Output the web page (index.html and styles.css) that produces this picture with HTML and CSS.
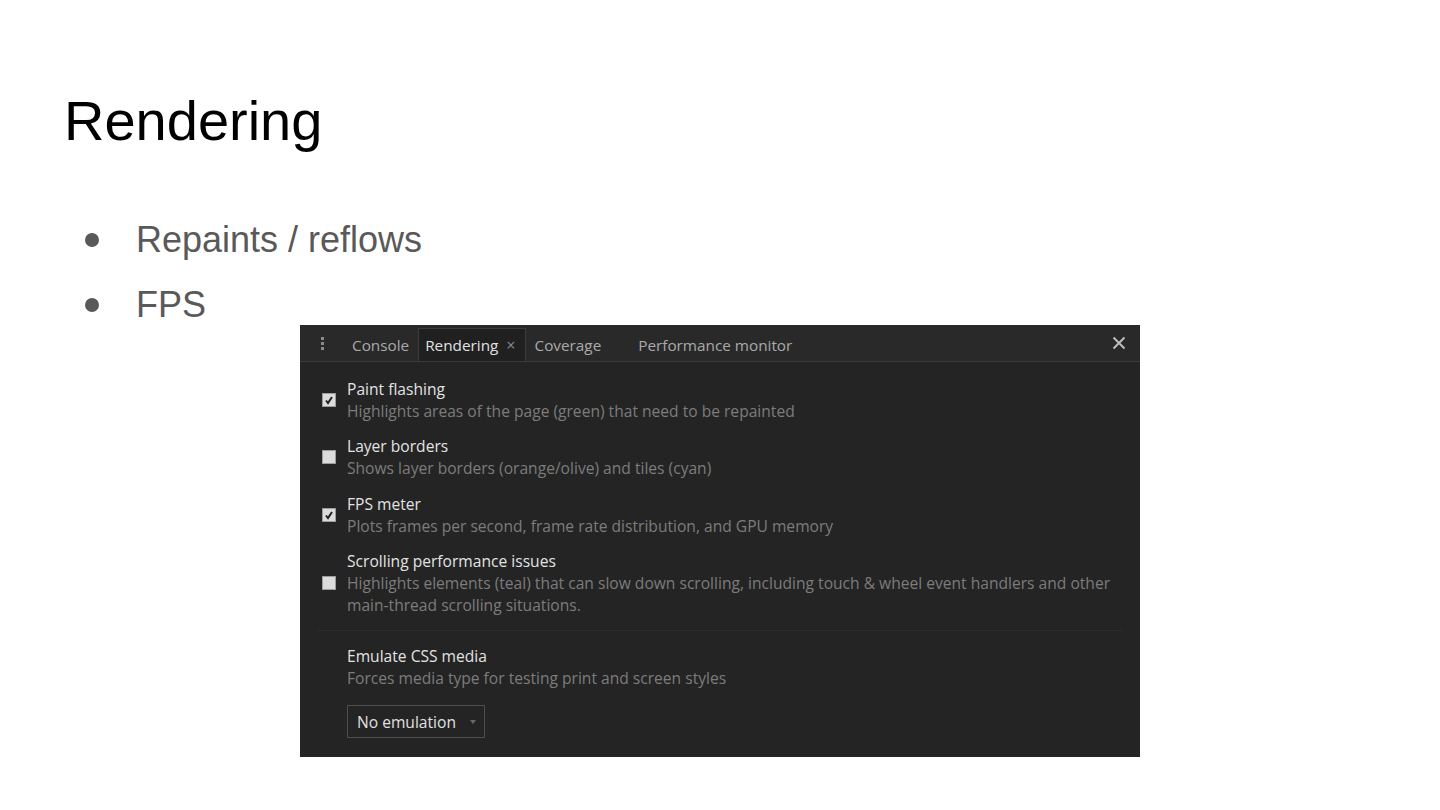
FILE: index.html
```html
<!DOCTYPE html>
<html>
<head>
<meta charset="utf-8">
<link rel="stylesheet" href="styles.css">
</head>
<body>
<div class="slide">
  <h1 class="title">Rendering</h1>
  <ul class="bullets">
    <li>Repaints / reflows</li>
    <li>FPS</li>
  </ul>
  <div class="panel">
    <div class="tabbar">
      <div class="dots"><span></span><span></span><span></span></div>
      <div class="tab">Console</div>
      <div class="tab active">Rendering <span class="tabx">×</span></div>
      <div class="tab">Coverage</div>
      <div class="tab perf">Performance monitor</div>
      <div class="spacer"></div>
      <svg class="close" width="14" height="14" viewBox="0 0 14 14"><path d="M1.5 1.5L12.5 12.5M12.5 1.5L1.5 12.5" stroke="#bdbdbd" stroke-width="2"/></svg>
    </div>
    <div class="content">
      <div class="opt">
        <div class="cb checked"><svg width="10" height="10" viewBox="0 0 10 10"><path d="M2 5.5L4 8L8 2" stroke="#222" stroke-width="2" fill="none"/></svg></div>
        <div class="txt">
          <div class="otitle">Paint flashing</div>
          <div class="odesc">Highlights areas of the page (green) that need to be repainted</div>
        </div>
      </div>
      <div class="opt">
        <div class="cb"></div>
        <div class="txt">
          <div class="otitle">Layer borders</div>
          <div class="odesc">Shows layer borders (orange/olive) and tiles (cyan)</div>
        </div>
      </div>
      <div class="opt">
        <div class="cb checked"><svg width="10" height="10" viewBox="0 0 10 10"><path d="M2 5.5L4 8L8 2" stroke="#222" stroke-width="2" fill="none"/></svg></div>
        <div class="txt">
          <div class="otitle">FPS meter</div>
          <div class="odesc">Plots frames per second, frame rate distribution, and GPU memory</div>
        </div>
      </div>
      <div class="opt">
        <div class="cb"></div>
        <div class="txt">
          <div class="otitle">Scrolling performance issues</div>
          <div class="odesc">Highlights elements (teal) that can slow down scrolling, including touch &amp; wheel event handlers and other main-thread scrolling situations.</div>
        </div>
      </div>
      <div class="divider"></div>
      <div class="media">
        <div class="otitle">Emulate CSS media</div>
        <div class="odesc">Forces media type for testing print and screen styles</div>
        <div class="select">No emulation <span class="caret"></span></div>
      </div>
    </div>
  </div>
</div>
</body>
</html>
```
FILE: styles.css
```css
* { box-sizing: border-box; }
html, body { margin: 0; padding: 0; background: #fff; }
.slide {
  width: 1440px;
  height: 810px;
  position: relative;
  overflow: hidden;
  font-family: "Liberation Sans", Arial, sans-serif;
}
.title {
  margin: 0;
  padding: 87px 0 0 64px;
  font-weight: normal;
  font-size: 56px;
  line-height: 68px;
  color: #000;
}
.bullets {
  list-style: none;
  margin: 0;
  padding: 52px 0 0 0;
}
.bullets li {
  position: relative;
  padding-left: 136px;
  font-size: 36px;
  line-height: 65px;
  color: #595959;
}
.bullets li::before {
  content: "";
  position: absolute;
  left: 85px;
  top: 26px;
  width: 14px;
  height: 14px;
  border-radius: 50%;
  background: #595959;
}
.panel {
  position: absolute;
  left: 300px;
  top: 325px;
  width: 840px;
  height: 432px;
  background: #242424;
  font-family: "Open Sans", "Noto Sans", sans-serif;
}
.tabbar {
  height: 37px;
  background: #292929;
  border-bottom: 1px solid #3a3a3a;
  display: flex;
  align-items: stretch;
  padding-left: 18px;
  padding-right: 14px;
}
.dots {
  width: 8px;
  display: flex;
  flex-direction: column;
  justify-content: center;
  align-items: center;
  gap: 2px;
  margin-right: 17px;
}
.dots span {
  width: 3px;
  height: 3px;
  background: #8a8a8a;
}
.tab {
  display: flex;
  align-items: center;
  padding: 0 8px;
  font-size: 15.3px;
  color: #a9a9a9;
  border-left: 1px solid transparent;
  border-right: 1px solid transparent;
  border-top: 1px solid transparent;
  margin-top: 3px;
}
.tab.active {
  background: #202020;
  color: #e0e0e0;
  border-color: #3c3c3c;
  padding: 0 9px 0 6px;
}
.tabx {
  color: #8a8a8a;
  margin-left: 8px;
  font-size: 16px;
}
.perf { margin-left: 19px; }
.spacer { flex: 1; }
.close { align-self: center; margin-top: 0px; }
.content {
  padding: 10px 18px 0 18px;
}
.opt {
  display: flex;
  align-items: center;
  padding: 6px 0 7px 4px;
}
.opt:first-child { padding-top: 6px; }
.opt:nth-child(3), .opt:nth-child(4) { padding-top: 7px; padding-bottom: 6px; }
.cb {
  width: 14px;
  height: 14px;
  background: #dcdcdc;
  border: 1px solid #9c9c9c;
  margin-right: 11px;
  display: flex;
  align-items: center;
  justify-content: center;
  flex: none;
}
.txt { display: flex; flex-direction: column; }
.otitle {
  font-size: 15.6px;
  line-height: 22px;
  color: #e2e2e2;
}
.odesc {
  font-size: 15.6px;
  line-height: 22px;
  color: #7c7c7c;
}
.divider {
  height: 1px;
  background: #2e2e2e;
  margin: 8px 0 0 0;
}
.media {
  padding: 14px 0 0 29px;
}
.select {
  margin-top: 16px;
  width: 138px;
  height: 33px;
  border: 1px solid #4d4d4d;
  background: #242424;
  color: #e0e0e0;
  font-size: 15.6px;
  display: flex;
  align-items: center;
  padding-left: 9px;
}
.caret {
  margin-left: 14px;
  width: 0;
  height: 0;
  border-left: 3px solid transparent;
  border-right: 3px solid transparent;
  border-top: 4px solid #6a6a6a;
}
```
